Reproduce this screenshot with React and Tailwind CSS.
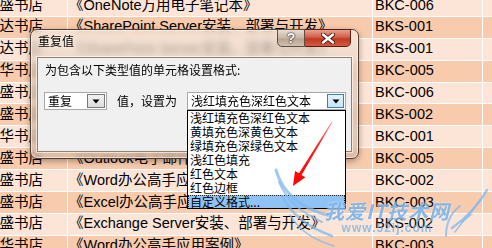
const rows = [
  { a: '鼎盛书店', b: '《OneNote万用电子笔记本》', c: 'BKC-006' },
  { a: '博达书店', b: '《SharePoint Server安装、部署与开发》', c: 'BKS-001' },
  { a: '博达书店', b: '《SharePoint Server安装、部署与开发》', c: 'BKS-001' },
  { a: '隆华书店', b: '《Outlook电子邮件应用技巧》', c: 'BKC-005' },
  { a: '鼎盛书店', b: '《OneNote万用电子笔记本》', c: 'BKC-006' },
  { a: '鼎盛书店', b: '《Exchange Server安装、部署与开发》', c: 'BKS-002' },
  { a: '隆华书店', b: '《Word办公高手应用案例》', c: 'BKC-001' },
  { a: '鼎盛书店', b: '《Outlook电子邮件应用技巧》', c: 'BKC-005' },
  { a: '鼎盛书店', b: '《Word办公高手应用案例》', c: 'BKC-002' },
  { a: '鼎盛书店', b: '《Excel办公高手应用案例》', c: 'BKC-003' },
  { a: '鼎盛书店', b: '《Exchange Server安装、部署与开发》', c: 'BKS-002' },
  { a: '隆华书店', b: '《Word办公高手应用案例》', c: 'BKC-003' },
];

const items = [
  '浅红填充色深红色文本',
  '黄填充色深黄色文本',
  '绿填充色深绿色文本',
  '浅红色填充',
  '红色文本',
  '红色边框',
  '自定义格式...',
];

function Tri() {
  return (
    <svg width="8" height="5" viewBox="0 0 8 5">
      <path d="M0.5 0.5 L7.5 0.5 L4 4.5 Z" fill="#000" />
    </svg>
  );
}

export default function App() {
  return (
    <div className="relative w-[492px] h-[248px] overflow-hidden bg-white font-['Liberation_Sans','Noto_Sans_CJK_SC',sans-serif] text-[14.5px] text-black">
      {/* spreadsheet */}
      <div className="-mt-[5px] flex flex-col">
        {rows.map((r, i) => (
          <div
            key={i}
            className={
              i % 2 === 1
                ? 'flex h-[21.9px] shrink-0 border-b border-white bg-[#f8cbad]'
                : 'flex h-[21.9px] shrink-0 border-b border-white bg-[#fce4d6]'
            }
          >
            <div className="w-[68px] shrink-0 border-r border-white overflow-hidden flex items-center whitespace-nowrap">
              <span className="-ml-[15px]">{r.a}</span>
            </div>
            <div className="w-[305px] shrink-0 border-r border-white overflow-hidden flex items-center whitespace-nowrap pl-[1px]">
              {r.b}
            </div>
            <div className="w-[110px] shrink-0 border-r border-white overflow-hidden flex items-center whitespace-nowrap pl-[2px]">
              {r.c}
            </div>
            <div className="flex-1" />
          </div>
        ))}
      </div>

      {/* dialog */}
      <div className="absolute left-[30px] top-[29px] w-[329px] h-[130px] rounded-[7px] border border-[#4e3e33] bg-[linear-gradient(to_bottom,rgba(244,230,218,0.72),rgba(226,200,180,0.7)_40%,rgba(214,184,160,0.75))] backdrop-blur-[3px] shadow-[inset_0_0_0_1px_rgba(255,255,255,0.55),0_2px_6px_rgba(0,0,0,0.35)] flex flex-col px-[6px] pb-[6px] font-['Noto_Sans_CJK_SC',sans-serif] text-[12px]">
        <div className="h-[27px] shrink-0 flex items-start justify-between">
          <div className="pt-[4px] pl-[1px] leading-[14px] text-[12px] text-black [text-shadow:0_0_4px_rgba(255,255,255,0.9)]">
            重复值
          </div>
          <div className="flex -mt-[1px] mr-[1px]">
            <div className="w-[28px] h-[18px] rounded-bl-[5px] border border-[#5e4e42] bg-[linear-gradient(to_bottom,#e8dcd2,#c9b6a6_50%,#b9a392_55%,#d0bfb1)] flex items-center justify-center font-['Liberation_Sans',sans-serif] text-[14px] font-bold leading-none text-white [text-shadow:0_0_1px_#3a2e26,0_0_1px_#3a2e26,0_0_2px_#3a2e26]">
              ?
            </div>
            <div className="w-[46px] h-[18px] rounded-br-[5px] border border-l-0 border-[#5a1c10] bg-[linear-gradient(to_bottom,#e9a08e,#d0604a_45%,#c03a22_55%,#d45a40)] flex items-center justify-center">
              <svg width="14" height="11" viewBox="0 0 14 11">
                <path d="M2 1.5 L12 9.5 M12 1.5 L2 9.5" stroke="#4a1a10" strokeWidth="4.2" strokeLinecap="round" />
                <path d="M2 1.5 L12 9.5 M12 1.5 L2 9.5" stroke="#ffffff" strokeWidth="2.4" strokeLinecap="round" />
              </svg>
            </div>
          </div>
        </div>
        <div className="flex-1 border border-[#8f8072] bg-[#f0f0f0] shadow-[0_0_0_1px_rgba(255,255,255,0.6)] pl-[6px] pt-[5px] flex flex-col">
          <div className="leading-[14px] pl-[1px]">为包含以下类型值的单元格设置格式:</div>
          <div className="mt-[15px] flex items-center h-[18px]">
            <div className="w-[63px] h-[18px] border border-[#a8a8a8] bg-white flex items-center">
              <span className="flex-1 pl-[3px] leading-[14px]">重复</span>
              <div className="w-[18px] h-[14px] mr-[1px] border border-[#7a7a7a] bg-[linear-gradient(to_bottom,#f2f2f2,#dcdcdc)] flex items-center justify-center">
                <Tri />
              </div>
            </div>
            <div className="w-[70px] pl-[10px] leading-[14px]">值，设置为</div>
            <div className="ml-[10px] w-[159px] h-[18px] border border-[#a8a8a8] bg-white flex items-center">
              <span className="flex-1 pl-[3px] leading-[14px] whitespace-nowrap">浅红填充色深红色文本</span>
              <div className="w-[17px] h-[14px] mr-[1px] border border-[#3c7fb1] bg-[linear-gradient(to_bottom,#e5f4fc,#c4e5f6)] flex items-center justify-center">
                <Tri />
              </div>
            </div>
          </div>
        </div>
      </div>

      {/* dropdown list */}
      <div className="absolute left-[187px] top-[110px] w-[159px] h-[99px] overflow-hidden border border-black bg-white flex flex-col font-['Noto_Sans_CJK_SC',sans-serif] text-[12px]">
        {items.map((t, i) =>
          i === items.length - 1 ? (
            <div key={i} className="h-[14px] shrink-0 leading-[12px] pl-[1px] bg-[#8fc3f6] border border-dotted border-[#222] whitespace-nowrap">
              {t}
            </div>
          ) : (
            <div key={i} className="h-[14px] shrink-0 leading-[14px] pl-[2px] whitespace-nowrap">
              {t}
            </div>
          )
        )}
      </div>

      {/* red arrow + watermark wings */}
      <svg className="absolute left-0 top-0 pointer-events-none" width="492" height="248" viewBox="0 0 492 248">
        <defs>
          <linearGradient id="arr" x1="332" y1="122" x2="293" y2="186" gradientUnits="userSpaceOnUse">
            <stop offset="0" stopColor="#ff9a9a" />
            <stop offset="0.35" stopColor="#ff2020" />
            <stop offset="1" stopColor="#ff0000" />
          </linearGradient>
        </defs>
        <polygon
          points="332.4,122.2 331.6,121.8 299.0,173.3 295.0,171.0 293,186 305.4,177.2 301.6,174.9"
          fill="url(#arr)"
        />
        <g fill="none" stroke="#7db8ee" strokeOpacity="0.75" strokeLinecap="round">
          <path d="M276 170 C 282 192, 300 208, 330 216" strokeWidth="3" />
          <path d="M279 182 C 286 200, 300 212, 322 222" strokeWidth="2" />
          <path d="M282 196 C 292 216, 310 228, 332 236" strokeWidth="2.5" />
          <path d="M290 215 C 300 232, 315 240, 334 246" strokeWidth="1.5" />
          <path d="M487 190 C 478 206, 466 218, 452 228" strokeWidth="2.5" />
          <path d="M480 200 C 472 212, 462 222, 455 232" strokeWidth="1.5" />
          <path d="M460 206 C 452 212, 446 220, 446 236" strokeWidth="2" />
          <path d="M472 214 L 462 222" strokeWidth="1.5" />
        </g>
      </svg>
      <div className="absolute left-[324px] top-[201px] pointer-events-none flex flex-col items-center leading-none">
        <span className="text-[20px] font-bold italic tracking-[1px] text-[#5ea3e6]/75 font-['Noto_Sans_CJK_SC',sans-serif] [text-shadow:0_0_2px_rgba(255,255,255,0.8)]">
          我爱IT技术网
        </span>
        <span className="mt-[1px] text-[12px] font-bold tracking-[1px] text-[#6aaee8]/70 font-['Liberation_Sans',sans-serif]">
          www.52ij.com
        </span>
      </div>
    </div>
  );
}
